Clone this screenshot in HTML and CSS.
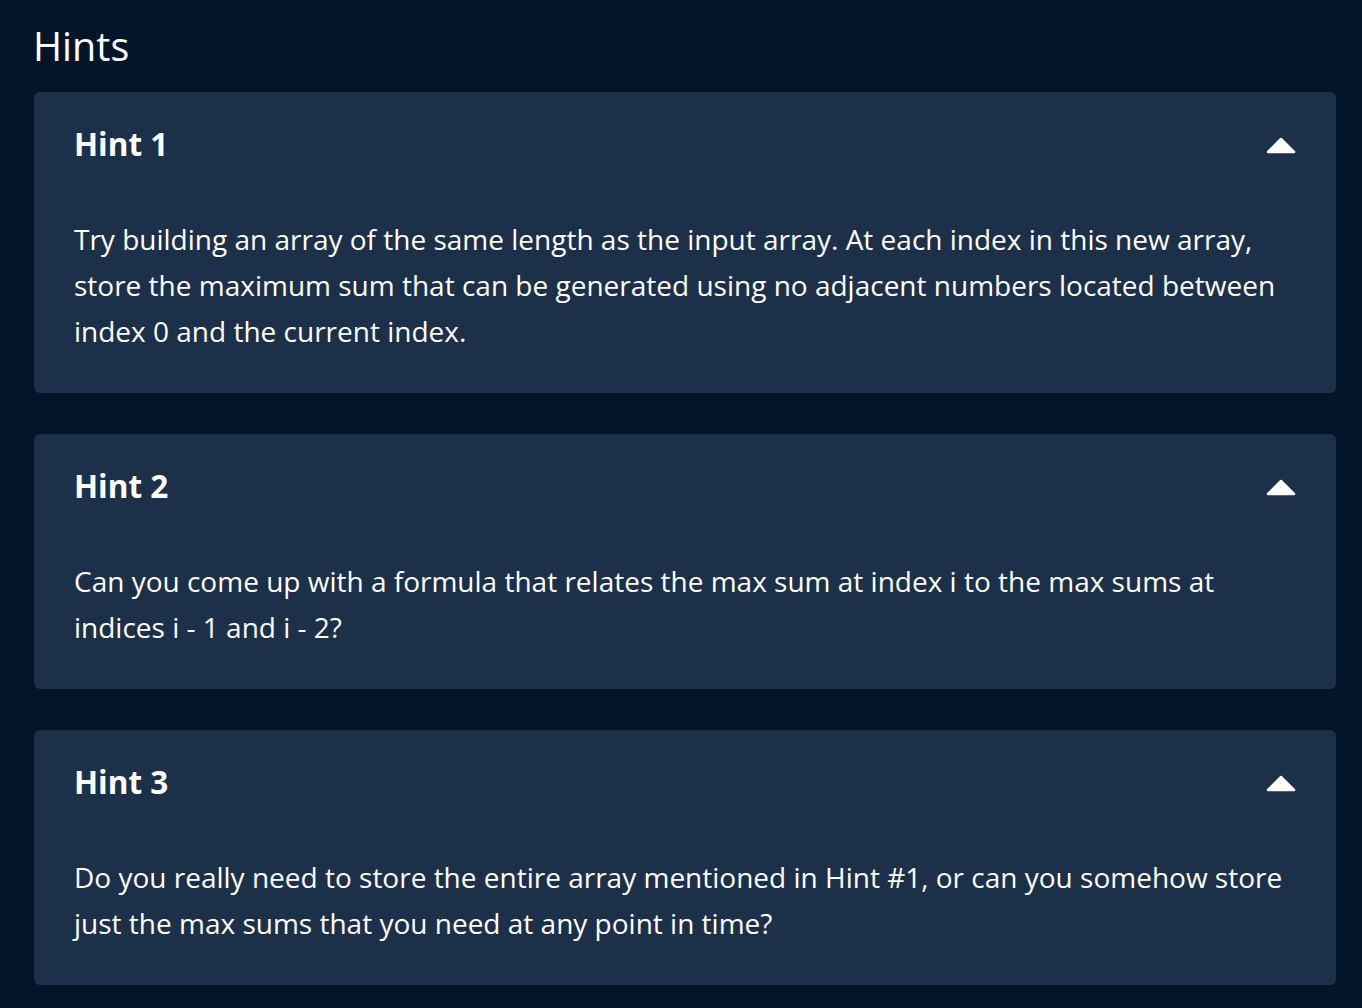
FILE: index.html
```html
<!DOCTYPE html>
<html lang="en">
<head>
<meta charset="utf-8">
<title>Hints</title>
<link rel="stylesheet" href="styles.css">
</head>
<body>
<main class="page">
  <h2 class="page-title">Hints</h2>
  <section class="hint">
    <div class="hint-header">
      <h3 class="hint-title">Hint 1</h3>
      <svg class="caret" width="30" height="17" viewBox="0 0 30 17"><path d="M15 2 L28 15 L2 15 Z" fill="#fff" stroke="#fff" stroke-width="2.5" stroke-linejoin="round"/></svg>
    </div>
    <p class="hint-body">Try building an array of the same length as the input array. At each index in this new array, store the maximum sum that can be generated using no adjacent numbers located between index 0 and the current index.</p>
  </section>
  <section class="hint">
    <div class="hint-header">
      <h3 class="hint-title">Hint 2</h3>
      <svg class="caret" width="30" height="17" viewBox="0 0 30 17"><path d="M15 2 L28 15 L2 15 Z" fill="#fff" stroke="#fff" stroke-width="2.5" stroke-linejoin="round"/></svg>
    </div>
    <p class="hint-body">Can you come up with a formula that relates the max sum at index i to the max sums at indices i - 1 and i - 2?</p>
  </section>
  <section class="hint">
    <div class="hint-header">
      <h3 class="hint-title">Hint 3</h3>
      <svg class="caret" width="30" height="17" viewBox="0 0 30 17"><path d="M15 2 L28 15 L2 15 Z" fill="#fff" stroke="#fff" stroke-width="2.5" stroke-linejoin="round"/></svg>
    </div>
    <p class="hint-body">Do you really need to store the entire array mentioned in Hint #1, or can you somehow store just the max sums that you need at any point in time?</p>
  </section>
</main>
</body>
</html>
```

FILE: styles.css
```css
html, body {
  margin: 0;
  padding: 0;
  background: #04152a;
}
body {
  font-family: "Open Sans", "Noto Sans", sans-serif;
  color: #ffffff;
}
.page {
  padding: 0 26px 0 34px;
  display: flex;
  flex-direction: column;
  gap: 41px;
}
.page-title {
  margin: 20px 0 -21px -1px;
  font-size: 39.5px;
  line-height: 52px;
  font-weight: 400;
}
.hint {
  background: #1d3049;
  border-radius: 6px;
}
.hint-header {
  display: flex;
  align-items: center;
  justify-content: space-between;
  padding: 30px 40px 30px 40px;
}
.hint-title {
  margin: 0;
  font-size: 31.5px;
  line-height: 44px;
  font-weight: 700;
}
.caret {
  display: block;
  margin-top: 2px;
}
.hint-body {
  margin: 0;
  padding: 20px 40px 39px 40px;
  font-size: 28px;
  line-height: 46px;
}
```
